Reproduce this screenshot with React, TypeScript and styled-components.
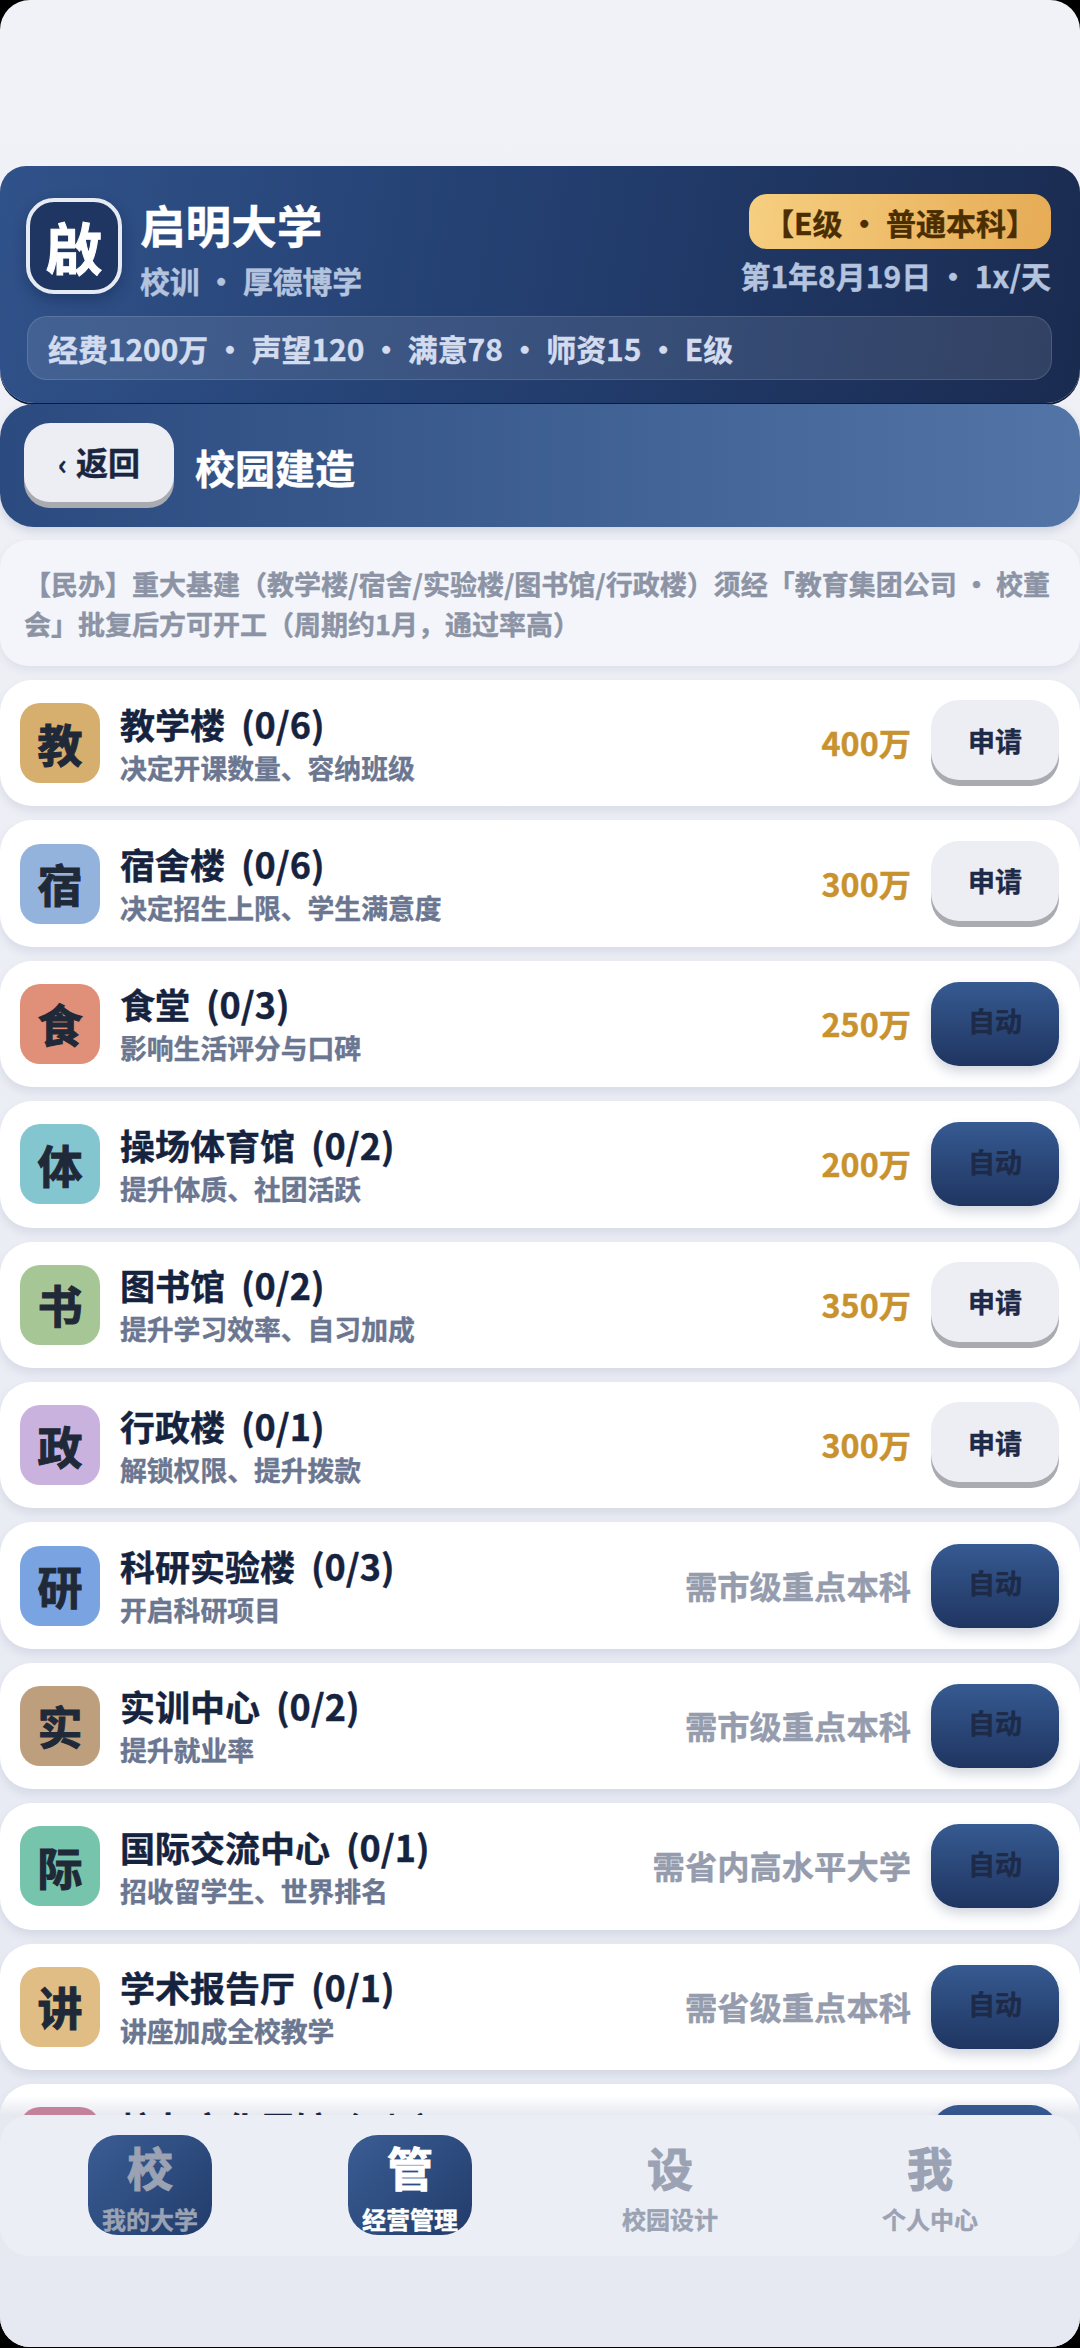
import React from 'react';
import styled, { createGlobalStyle, css } from 'styled-components';

const GlobalStyle = createGlobalStyle`
	html, body {
		margin: 0;
		padding: 0;
		background: #000;
	}
	* {
		box-sizing: border-box;
	}
	body {
		font-family: "Noto Sans CJK SC", "Noto Sans", sans-serif;
	}
`

// the reference text is a touch heavier than plain bold
const heavy = css`
	font-weight: 700;
	-webkit-text-stroke: 0.4px currentColor;
`

interface Building {
	icon: string,
	color: string,
	name: string,
	count: string,
	desc: string,
	price: string,
	locked?: boolean,
	auto?: boolean,
}

const buildings: Building[] = [
	{ icon: '教', color: '#d6ae6e', name: '教学楼', count: '(0/6)', desc: '决定开课数量、容纳班级', price: '400万' },
	{ icon: '宿', color: '#94b3dc', name: '宿舍楼', count: '(0/6)', desc: '决定招生上限、学生满意度', price: '300万' },
	{ icon: '食', color: '#e08f78', name: '食堂', count: '(0/3)', desc: '影响生活评分与口碑', price: '250万', auto: true },
	{ icon: '体', color: '#84c6d0', name: '操场体育馆', count: '(0/2)', desc: '提升体质、社团活跃', price: '200万', auto: true },
	{ icon: '书', color: '#a6c795', name: '图书馆', count: '(0/2)', desc: '提升学习效率、自习加成', price: '350万' },
	{ icon: '政', color: '#c9b2de', name: '行政楼', count: '(0/1)', desc: '解锁权限、提升拨款', price: '300万' },
	{ icon: '研', color: '#7aa3e2', name: '科研实验楼', count: '(0/3)', desc: '开启科研项目', price: '需市级重点本科', locked: true, auto: true },
	{ icon: '实', color: '#bd9f7e', name: '实训中心', count: '(0/2)', desc: '提升就业率', price: '需市级重点本科', locked: true, auto: true },
	{ icon: '际', color: '#76c4ab', name: '国际交流中心', count: '(0/1)', desc: '招收留学生、世界排名', price: '需省内高水平大学', locked: true, auto: true },
	{ icon: '讲', color: '#e0bd84', name: '学术报告厅', count: '(0/1)', desc: '讲座加成全校教学', price: '需省级重点本科', locked: true, auto: true },
	{ icon: '艺', color: '#c4829a', name: '校友文化展馆', count: '(0/1)', desc: '提升校园文化', price: '需省级重点本科', locked: true, auto: true },
];

const tabs = [
	{ char: '校', label: '我的大学', filled: true },
	{ char: '管', label: '经营管理', filled: true, active: true },
	{ char: '设', label: '校园设计' },
	{ char: '我', label: '个人中心' },
];

export default function App() {
	return (
		<Page>
			<GlobalStyle />
			<Header>
				<HeaderTop>
					<Crest>啟</Crest>
					<SchoolInfo>
						<SchoolName>启明大学</SchoolName>
						<Motto>校训 · 厚德博学</Motto>
					</SchoolInfo>
					<HeaderRight>
						<RankBadge>【E级 · 普通本科】</RankBadge>
						<DateText>第1年8月19日 · 1x/天</DateText>
					</HeaderRight>
				</HeaderTop>
				<StatBar>经费1200万 · 声望120 · 满意78 · 师资15 · E级</StatBar>
			</Header>
			<SubHeader>
				<BackButton><small>‹</small>返回</BackButton>
				<SubTitle>校园建造</SubTitle>
			</SubHeader>
			<Notice>【民办】重大基建（教学楼/宿舍/实验楼/图书馆/行政楼）须经「教育集团公司 · 校董会」批复后方可开工（周期约1月，通过率高）</Notice>
			<List>
				{buildings.map((item) => (
					<Card key={item.icon}>
						<IconTile $color={item.color}>{item.icon}</IconTile>
						<CardText>
							<CardName>{item.name}<span>{item.count}</span></CardName>
							<CardDesc>{item.desc}</CardDesc>
						</CardText>
						<Price $locked={item.locked}>{item.price}</Price>
						{item.auto ? <AutoButton>自动</AutoButton> : <ApplyButton>申请</ApplyButton>}
					</Card>
				))}
			</List>
			<BottomArea>
				<Nav>
					{tabs.map((tab) => (
						<NavItem key={tab.char}>
							<NavTab $filled={tab.filled} $active={tab.active}>
								<NavChar>{tab.char}</NavChar>
								<NavLabel>{tab.label}</NavLabel>
							</NavTab>
						</NavItem>
					))}
				</Nav>
			</BottomArea>
		</Page>
	)
}

const Page = styled.div`
	position: relative;
	width: 1080px;
	height: 2347px;
	overflow: hidden;
	border-radius: 30px;
	padding-top: 166px;
	background: linear-gradient(180deg, #f1f2f7 0%, #e6e9f2 100%);
`

const Header = styled.header`
	height: 237px;
	padding: 28px 29px 0 26px;
	border-radius: 26px 26px 34px 34px;
	background: linear-gradient(100deg, #30528a 0%, #233e6f 50%, #1a2b50 100%);
	box-shadow: 0 2px 0 #0f1c3a;
`

const HeaderTop = styled.div`
	display: flex;
	align-items: flex-start;
`

const Crest = styled.div`
	width: 96px;
	height: 96px;
	margin-top: 4px;
	flex-shrink: 0;
	display: flex;
	align-items: center;
	justify-content: center;
	border: 4px solid #e6eaf3;
	border-radius: 28px;
	background: #1f3562;
	box-shadow: 0 6px 14px rgba(10, 20, 50, 0.3);
	color: #fff;
	font-size: 56px;
	line-height: 1;
	${heavy}
	-webkit-text-stroke-width: 1px;
`

const SchoolInfo = styled.div`
	margin-left: 18px;
	display: flex;
	flex-direction: column;
`

const SchoolName = styled.div`
	color: #fff;
	font-size: 45.6px;
	line-height: 60px;
	${heavy}
`

const Motto = styled.div`
	margin-top: 6px;
	color: #b4c3de;
	font-size: 29.8px;
	line-height: 40px;
	white-space: pre;
	${heavy}
`

const HeaderRight = styled.div`
	margin-left: auto;
	display: flex;
	flex-direction: column;
	align-items: flex-end;
`

const RankBadge = styled.div`
	height: 55px;
	width: 302px;
	display: flex;
	align-items: center;
	justify-content: center;
	border-radius: 18px;
	background: linear-gradient(100deg, #f6cf80 0%, #e6ab55 100%);
	color: #4a2e00;
	font-size: 30px;
	white-space: nowrap;
	${heavy}
`

const DateText = styled.div`
	margin-top: 6px;
	color: #b4c3de;
	font-size: 30px;
	line-height: 40px;
	white-space: nowrap;
	${heavy}
`

const StatBar = styled.div`
	margin-top: 16px;
	margin-right: -1px;
	margin-left: 1px;
	height: 64px;
	padding-left: 20px;
	display: flex;
	align-items: center;
	border: 1px solid rgba(255, 255, 255, 0.13);
	border-radius: 20px;
	background: rgba(255, 255, 255, 0.1);
	color: #d3dcee;
	font-size: 29.9px;
	white-space: nowrap;
	${heavy}
`

const SubHeader = styled.div`
	height: 123px;
	margin-top: 1px;
	padding: 19px 24px 0;
	display: flex;
	align-items: flex-start;
	border-radius: 34px;
	background: linear-gradient(90deg, #2b4a7f 0%, #5274a6 100%);
	box-shadow: 0 4px 10px rgba(30, 50, 90, 0.15);
`

const BackButton = styled.button`
	width: 150px;
	height: 79px;
	padding: 0 0 4px;
	border: 0;
	border-radius: 26px;
	background: #eceef4;
	box-shadow: 0 6px 0 #a9abb0;
	color: #1a2640;
	font-family: inherit;
	font-size: 32px;
	${heavy}

	small {
		margin-right: 9px;
		font-size: 28px;
	}
`

const SubTitle = styled.h1`
	margin: 0 0 0 21px;
	color: #fff;
	font-size: 40px;
	line-height: 88px;
	${heavy}
`

const Notice = styled.div`
	height: 126px;
	margin-top: 13px;
	padding: 24px 24px 0;
	border-radius: 28px;
	background: #f3f5fa;
	box-shadow: 0 4px 10px rgba(30, 50, 90, 0.08);
	color: #8b93a5;
	font-size: 27px;
	line-height: 40px;
	${heavy}
`

const List = styled.div`
	margin-top: 14px;
	display: flex;
	flex-direction: column;
	gap: 14px;
`

const Card = styled.div`
	height: 126.4px;
	flex-shrink: 0;
	padding: 0 21px 0 20px;
	display: flex;
	align-items: center;
	border-radius: 32px;
	background: #fff;
	box-shadow: 0 5px 10px rgba(40, 60, 110, 0.1);

	&:last-child {
		background: linear-gradient(180deg, #fff 0, #fff 12px, #e6e8f0 32px);
	}
`

const IconTile = styled.div<{ $color: string }>`
	width: 80px;
	height: 80px;
	flex-shrink: 0;
	display: flex;
	align-items: center;
	justify-content: center;
	border-radius: 20px;
	background: ${({ $color }) => $color};
	color: #1f2937;
	font-size: 45px;
	line-height: 1;
	${heavy}
	-webkit-text-stroke-width: 1px;
`

const CardText = styled.div`
	margin-left: 20px;
	padding-bottom: 2px;
	flex: 1;
	min-width: 0;
`

const CardName = styled.div`
	color: #16233f;
	font-size: 35px;
	line-height: 48px;
	white-space: nowrap;
	${heavy}

	span {
		margin-left: 16px;
		font-size: 36px;
	}
`

const CardDesc = styled.div`
	margin-top: 2px;
	color: #6b7690;
	font-size: 26.8px;
	line-height: 36px;
	white-space: nowrap;
	${heavy}
`

const Price = styled.div<{ $locked?: boolean }>`
	margin-right: 20px;
	padding-bottom: 2px;
	color: ${({ $locked }) => ($locked ? '#959cad' : '#c8922f')};
	font-size: 32.3px;
	white-space: nowrap;
	${heavy}
`

const ApplyButton = styled.button`
	width: 128px;
	height: 80px;
	margin-bottom: 6px;
	flex-shrink: 0;
	padding: 0;
	border: 0;
	border-radius: 28px;
	background: #eceef4;
	box-shadow: 0 6px 0 #a9abb0;
	color: #1d2a48;
	font-family: inherit;
	font-size: 27px;
	${heavy}
`

const AutoButton = styled.button`
	width: 128px;
	height: 84px;
	flex-shrink: 0;
	padding: 0 0 6px;
	border: 0;
	border-radius: 28px;
	background: linear-gradient(180deg, #365a91 0%, #1f3561 100%);
	box-shadow: 0 6px 12px rgba(30, 50, 90, 0.2);
	color: #1d2a48;
	font-family: inherit;
	font-size: 27px;
	${heavy}
`

const BottomArea = styled.div`
	position: absolute;
	left: 0;
	right: 0;
	bottom: 0;
	height: 232px;
	background: #e6e9f2;
`

const Nav = styled.nav`
	height: 141px;
	padding: 20px 20px 0;
	display: grid;
	grid-template-columns: repeat(4, 1fr);
	border-radius: 30px;
	background: #eceef5;
`

const NavItem = styled.div`
	display: flex;
	justify-content: center;
`

const NavTab = styled.div<{ $filled?: boolean, $active?: boolean }>`
	width: 124px;
	height: 100px;
	display: flex;
	flex-direction: column;
	align-items: center;
	border-radius: 30px;
	background: ${({ $filled }) => ($filled ? 'linear-gradient(135deg, #3a5d94 0%, #223c6b 100%)' : 'transparent')};
	color: ${({ $active }) => ($active ? '#fff' : '#9aa2b3')};
`

const NavChar = styled.div`
	margin-top: -3px;
	font-size: 46px;
	line-height: 69px;
	${heavy}
	-webkit-text-stroke-width: 1px;
`

const NavLabel = styled.div`
	font-size: 24px;
	line-height: 36px;
	white-space: nowrap;
	${heavy}
`
